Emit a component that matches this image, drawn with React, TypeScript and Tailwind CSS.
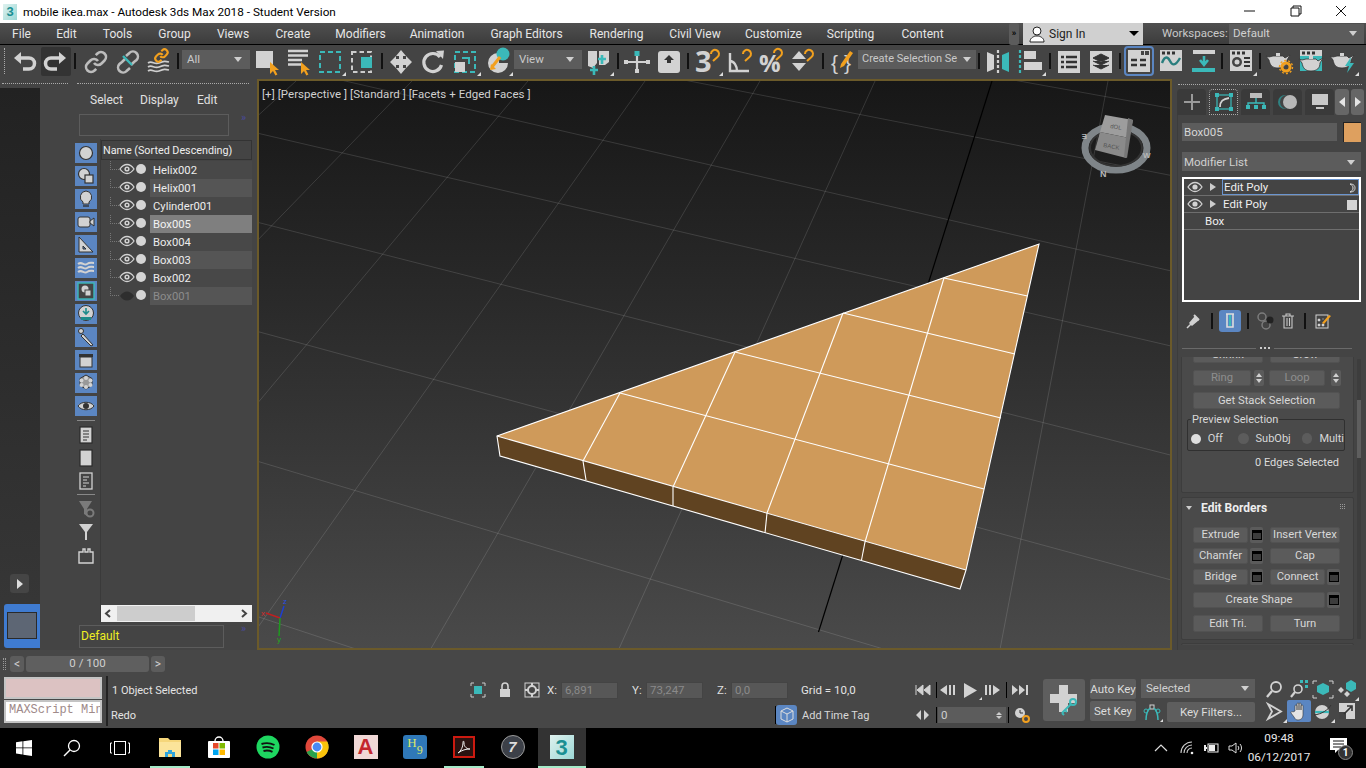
import React from 'react';

const L = '#d2d2d2';
const T = '#3bb9b9';
const O = '#f2a01e';

function Ico({ w = 32, h = 32, children }: { w?: number; h?: number; children?: React.ReactNode }) {
  return (
    <svg width={w} height={h} viewBox={`0 0 ${w} ${h}`} className="shrink-0 overflow-visible">
      {children}
    </svg>
  );
}
const Fly = ({ x = 30, y = 29 }: { x?: number; y?: number }) => <path d={`M${x} ${y}h-4l4-4z`} fill="#ddd" />;
const Cursor = ({ x, y }: { x: number; y: number }) => (
  <path transform={`translate(${x} ${y})`} d="M0 0l9 8H5l2.4 4.5-2 1L3 9l-3 3z" fill={O} />
);
const Hook = ({ x, y }: { x: number; y: number }) => (
  <path transform={`translate(${x} ${y})`} d="M1 4a4 4 0 1 1 6.5 3L3 11" stroke={O} strokeWidth="2" fill="none" />
);
const Win = ({ x = 5, y = 5, w = 22, h = 21, bars = true }: { x?: number; y?: number; w?: number; h?: number; bars?: boolean }) => (
  <g>
    <rect x={x} y={y} width={w} height={h} fill={L} />
    {bars && (
      <>
        <rect x={x + 2} y={y + 1.5} width="3" height="3" fill="#333" />
        <rect x={x + 7} y={y + 1.5} width="3" height="3" fill="#333" />
        <rect x={x + 12} y={y + 1.5} width="3" height="3" fill="#333" />
      </>
    )}
  </g>
);
const Teapot = ({ x, y, fill = L }: { x: number; y: number; fill?: string }) => (
  <g transform={`translate(${x} ${y})`}>
    <path d="M5 5h10l2 2 5-3-3 5c0 5-3 8-9 8S2 14 1 9L-2 5l3 1z" fill={fill} stroke="#333" strokeWidth="0.8" />
    <rect x="8" y="2" width="4" height="3" fill={fill} />
  </g>
);

const Sep7 = () => (
  <div className="flex h-[32px] w-[7px] items-center justify-center">
    <div className="h-[16px] w-[2px] bg-[#111]" />
  </div>
);
const Sep6 = () => (
  <div className="flex h-[32px] w-[6px] items-center justify-center">
    <div className="h-[16px] w-[2px] bg-[#111]" />
  </div>
);
const Caret = () => (
  <svg width="8" height="5" viewBox="0 0 8 5" className="shrink-0">
    <path d="M0 0h8L4 5z" fill="#cfcfcf" />
  </svg>
);

function Toolbar() {
  return (
    <div className="flex h-[34px] items-center bg-[#444444] pb-[2px] pl-[4px]">
      <div className="mr-[4px] h-[26px] w-[1px] border-l border-dotted border-[#aaa]" />
      <Ico>
        <path d="M9 13h11a5.5 5.5 0 0 1 0 11h-6" stroke={L} strokeWidth="3.5" fill="none" />
        <path d="M5 13l7-6v12z" fill={L} />
      </Ico>
      <div className="flex h-[29px] w-[30px] items-center justify-center rounded-[2px] bg-[#333333]">
        <Ico w={30}>
          <path d="M21 13H10a5.5 5.5 0 0 0 0 11h6" stroke={L} strokeWidth="3.5" fill="none" />
          <path d="M25 13l-7-6v12z" fill={L} />
        </Ico>
      </div>
      <div className="flex h-[32px] w-[8px] items-center justify-center">
        <div className="h-[16px] w-[2px] bg-[#111]" />
      </div>
      <Ico>
        <g transform="translate(5 5)" stroke="#bdbdbd" strokeWidth="2.6" fill="none">
          <path d="M10 13a5 5 0 0 0 7.54.54l3-3a5 5 0 0 0-7.07-7.07l-1.72 1.71" />
          <path d="M14 11a5 5 0 0 0-7.54-.54l-3 3a5 5 0 0 0 7.07 7.07l1.71-1.71" />
        </g>
      </Ico>
      <Ico>
        <g transform="translate(5 5)" stroke="#bdbdbd" strokeWidth="2.6" fill="none">
          <path d="M15 15l3-3 2.5-2a5 5 0 0 0-7.07-7.07L10 6" />
          <path d="M9 9l-3 3-2.5 2a5 5 0 0 0 7.07 7.07L14 18" />
        </g>
        <path d="M12 11l9 9" stroke={T} strokeWidth="2.4" />
      </Ico>
      <Ico>
        <g stroke="#cfcfcf" strokeWidth="1.6" fill="none">
          <path d="M5 18c4-3 6 2 11 0s6-2 10-1" />
          <path d="M5 22c4-3 6 2 11 0s6-2 10-1" />
          <path d="M5 26c4-3 6 2 11 0s6-2 10-1" />
        </g>
        <g transform="translate(11 3) scale(0.62)" stroke={O} strokeWidth="3.4" fill="none">
          <path d="M10 13a5 5 0 0 0 7.54.54l3-3a5 5 0 0 0-7.07-7.07l-1.72 1.71" />
          <path d="M14 11a5 5 0 0 0-7.54-.54l-3 3a5 5 0 0 0 7.07 7.07l1.71-1.71" />
        </g>
      </Ico>
      <div className="flex h-[32px] w-[6px] items-center justify-center">
        <div className="h-[16px] w-[2px] bg-[#111]" />
      </div>
      <div className="mb-[3px] ml-[1px] flex h-[19px] w-[68px] items-center justify-between bg-[#5c5c5c] pl-[5px] pr-[8px] text-[11.5px] text-[#c9c9c9]">
        <span>All</span>
        <Caret />
      </div>
      <Ico>
        <rect x="6" y="6" width="17" height="17" fill={L} />
        <Cursor x={20} y={17} />
      </Ico>
      <Ico>
        <path d="M6 6h20M6 10.5h20M6 15h14M6 19.5h14" stroke={L} strokeWidth="2.4" />
        <Cursor x={19} y={17} />
      </Ico>
      <Ico>
        <rect x="6" y="7" width="20" height="20" fill="none" stroke={T} strokeWidth="2" strokeDasharray="5 3" />
        <Fly x={32} y={31} />
      </Ico>
      <Ico>
        <rect x="6" y="7" width="19" height="20" fill="none" stroke="#ccc" strokeWidth="2" strokeDasharray="4.5 3" />
        <rect x="15" y="12" width="11" height="11" fill={T} />
      </Ico>
      <Sep7 />
      <Ico>
        <path d="M16 5l5 6h-3v3h3v-3l6 6-6 6v-3h-3v3h3l-5 6-5-6h3v-3h-3v3l-6-6 6-6v3h3v-3h-3z" fill={L} />
      </Ico>
      <Ico>
        <path d="M23 12a9 9 0 1 0 1.5 8" stroke={L} strokeWidth="3.2" fill="none" />
        <path d="M19 6l8-.5-1 8.5z" fill={L} />
      </Ico>
      <Ico>
        <rect x="6" y="7" width="20" height="20" fill="none" stroke={T} strokeWidth="2" strokeDasharray="5 3" />
        <rect x="6" y="17" width="10" height="10" fill={L} />
        <path d="M13 13h7v6" stroke={T} strokeWidth="2" fill="none" />
        <Fly x={32} y={31} />
      </Ico>
      <Ico>
        <path d="M17 8a10 10 0 1 0 10 10h-9v-9z" fill={L} />
        <circle cx="22" cy="9" r="6.5" fill={T} />
        <path d="M11 22l8-10" stroke={O} strokeWidth="3" />
        <path d="M10 19l5 5-6 1z" fill={O} />
        <Fly x={32} y={31} />
      </Ico>
      <div className="mb-[3px] ml-[1px] flex h-[19px] w-[68px] items-center justify-between bg-[#5c5c5c] pl-[5px] pr-[8px] text-[11.5px] text-[#c9c9c9]">
        <span>View</span>
        <Caret />
      </div>
      <Ico>
        <path d="M6 6h9v12l-4 5-5-2zM17 6h10v11l-4 3h-6z" fill={L} />
        <path d="M13 25h8M17 21v9M21 14h8M25 10v9" stroke={T} strokeWidth="2.6" transform="translate(-5 0)" />
        <Fly x={32} y={31} />
      </Ico>
      <Sep7 />
      <Ico>
        <path d="M5 17h22M16 10v17" stroke={L} strokeWidth="2.2" />
        <rect x="13.5" y="6" width="5" height="5" fill={T} />
        <rect x="3" y="15" width="4" height="4" fill={L} />
        <rect x="25" y="15" width="4" height="4" fill={L} />
        <rect x="14" y="24" width="4" height="4" fill={L} />
      </Ico>
      <Ico>
        <rect x="5" y="6" width="22" height="22" rx="3" fill={L} />
        <path d="M16 10l5 5h-3v3h-4v-3h-3z" fill="#333" />
      </Ico>
      <Sep6 />
      <Ico>
        <text x="4" y="27" fontSize="29" fontWeight="700" fill={L} fontFamily="Open Sans, sans-serif">3</text>
        <Hook x={19} y={5} />
        <Fly x={32} y={31} />
      </Ico>
      <Ico>
        <path d="M7 8v18h19M7 16c4 0 7 5 7 10" stroke={L} strokeWidth="2.4" fill="none" />
        <Hook x={19} y={5} />
      </Ico>
      <Ico>
        <text x="4" y="27" fontSize="24" fontWeight="700" fill={L} fontFamily="Open Sans, sans-serif">%</text>
        <Hook x={18} y={4} />
      </Ico>
      <Ico>
        <path d="M5 14l7-8 7 8zM5 18h14l-7 8z" fill={L} />
        <Hook x={17} y={5} />
      </Ico>
      <Sep7 />
      <Ico>
        <text x="5" y="25" fontSize="21" fill={L} fontFamily="Liberation Sans, sans-serif">{'{'}</text>
        <text x="18" y="25" fontSize="21" fill={L} fontFamily="Liberation Sans, sans-serif">{'}'}</text>
        <path d="M15 19l9-13 3 2-9 13-4 2z" fill={O} />
      </Ico>
      <div className="mb-[3px] flex h-[19px] w-[118px] items-center justify-between bg-[#5c5c5c] pl-[4px] pr-[5px] text-[11px] text-[#c9c9c9]">
        <span className="whitespace-nowrap">Create Selection Se</span>
        <Caret />
      </div>
      <Sep6 />
      <Ico>
        <path d="M5 7l7 3v14l-7 3z" fill={L} />
        <path d="M16 5v24" stroke={L} strokeWidth="2.2" strokeDasharray="3 2" />
        <path d="M27 7l-7 3v14l7 3z" fill={T} />
      </Ico>
      <Ico>
        <path d="M6 5v24" stroke={T} strokeWidth="2.2" strokeDasharray="3 2" />
        <rect x="10" y="6" width="12" height="8" fill={L} />
        <rect x="10" y="17" width="18" height="8" fill={L} />
        <Fly x={32} y={31} />
      </Ico>
      <Sep7 />
      <Ico>
        <rect x="5" y="6" width="22" height="22" fill={L} />
        <path d="M8 12h3M13 12h11M8 17h3M13 17h11M8 22h3M13 22h11" stroke="#333" strokeWidth="2.4" />
      </Ico>
      <Ico>
        <rect x="5" y="6" width="22" height="22" fill={L} />
        <path d="M16 9l8 4-8 4-8-4zM8 16l8 4 8-4M8 20l8 4 8-4" fill="#333" stroke="#333" strokeWidth="1" />
      </Ico>
      <Sep6 />
      <div className="mx-[1px] flex h-[30px] w-[30px] items-center justify-center rounded-[4px] border-2 border-[#5b86c2]">
        <svg width="22" height="22" viewBox="0 0 22 22">
          <rect x="0" y="0" width="22" height="22" fill={L} />
          <path d="M13 1h3v4h-3zM17 1h4v4h-4z" fill="#444" />
          <path d="M3 10h6M12 10h6M3 15h6M12 15h6" stroke="#333" strokeWidth="2.4" />
        </svg>
      </div>
      <Ico>
        <Win />
        <path d="M7 18c3-8 6-6 8-2s5 6 10-3" stroke="#2a7e7e" strokeWidth="2.4" fill="none" />
      </Ico>
      <Ico>
        <rect x="6" y="5" width="22" height="4" fill={L} />
        <path d="M17 11v7M13 15l4 5 4-5" stroke={T} strokeWidth="2.6" fill="none" />
        <rect x="5" y="23" width="23" height="4" fill={T} />
      </Ico>
      <Sep6 />
      <Ico>
        <Win />
        <circle cx="12" cy="17" r="5" fill="#444" />
        <circle cx="12" cy="17" r="2.5" fill={L} />
        <path d="M19 13h6M19 17h6M19 21h6" stroke="#333" strokeWidth="1.8" />
        <Fly x={32} y={31} />
      </Ico>
      <Sep6 />
      <Ico>
        <Teapot x={5} y={6} />
        <circle cx="23" cy="22" r="4" fill="none" stroke={O} strokeWidth="3" />
        <circle cx="23" cy="22" r="6.5" fill="none" stroke={O} strokeWidth="1.4" strokeDasharray="2 2" />
      </Ico>
      <Ico>
        <Win />
        <rect x="5" y="11" width="22" height="15" fill={T} />
        <Teapot x={6} y={9} />
      </Ico>
      <Ico>
        <Teapot x={5} y={6} />
        <path d="M24 12l-6 9h4l-2 7 7-10h-4z" fill={T} />
        <Fly x={32} y={31} />
      </Ico>
    </div>
  );
}

function Menu() {
  const items: [string, string][] = [
    ['File', 'w-[17px]'], ['Edit', 'w-[21px]'], ['Tools', 'w-[29px]'], ['Group', 'w-[33px]'], ['Views', 'w-[32px]'],
    ['Create', 'w-[36px]'], ['Modifiers', 'w-[47px]'], ['Animation', 'w-[54px]'], ['Graph Editors', 'w-[73px]'],
    ['Rendering', 'w-[55px]'], ['Civil View', 'w-[50px]'], ['Customize', 'w-[55px]'], ['Scripting', 'w-[47px]'], ['Content', 'w-[45px]'],
  ];
  return (
    <div className="flex h-[22px] items-center border-b border-black bg-gradient-to-b from-[#505050] to-[#3c3c3c] pl-[13px]">
      <div className="flex w-[932px] gap-[26px]">
        {items.map(([t, w]) => (
          <div key={t} className={`${w} flex justify-center whitespace-nowrap text-[12px] text-[#e6e6e6]`}>{t}</div>
        ))}
      </div>
      <div className="ml-[64px] flex h-[22px] w-[10px] items-center justify-center rounded-[2px] bg-[#5c5c5c] text-[9px] font-bold text-black">»</div>
      <div className="ml-[4px] flex h-[22px] w-[120px] items-center bg-[#d0d0d0] pl-[5px] pr-[4px] text-[12px] text-[#222]">
        <svg width="18" height="18" viewBox="0 0 18 18">
          <circle cx="9" cy="6" r="4" fill="#fff" stroke="#222" />
          <path d="M2 17c0-4 3-5 5-6h4c2 1 5 2 5 6z" fill="#fff" stroke="#222" />
        </svg>
        <span className="ml-[3px]">Sign In</span>
        <span className="ml-auto h-0 w-0 border-x-[5px] border-t-[5px] border-x-transparent border-t-black" />
      </div>
      <div className="ml-[19px] w-[67px] whitespace-nowrap text-[11.5px] text-[#c8c8c8]">Workspaces:</div>
      <div className="flex h-[20px] w-[135px] items-center justify-between bg-[#5c5c5c] pl-[4px] pr-[7px] text-[11.5px] text-[#d0d0d0]">
        <span>Default</span>
        <Caret />
      </div>
    </div>
  );
}

const xs81 = [296, 412, 528, 645, 760, 875, 1108, 1224, 180, 64];
const ys: [number, number][] = [[-16, 0.18], [40, 0.196], [112, 0.23], [185, 0.233], [279, 0.255], [392, 0.272], [528, 0.3], [690, 0.33]];

function Scene() {
  const topP: [number, number][] = [[620, 393], [735, 352], [843, 313], [944, 278]];
  const botP: [number, number][] = [[583, 461], [673, 487], [767, 513], [865, 542]];
  const rigP: [number, number][] = [[1027.5, 296], [1015, 354], [1001, 418], [984, 489]];
  const lowP: [number, number][] = [[586, 480], [673, 506], [765, 533], [861.5, 560]];
  return (
    <svg width="911" height="567" viewBox="259 81 911 567" className="absolute left-0 top-0">
      {xs81.map((x) => {
        const s = -0.19 - (1108 - x) * 0.00112;
        return <line key={x} x1={x} y1={81} x2={x + s * 567} y2={648} stroke="#fff" strokeOpacity="0.13" />;
      })}
      {ys.map(([y, s]) => (
        <line key={y} x1={259} y1={y + (259 - 480) * s} x2={1170} y2={y + (1170 - 480) * s} stroke="#fff" strokeOpacity="0.13" />
      ))}
      <line x1={992} y1={81} x2={818.5} y2={632} stroke="#000" strokeWidth="1.2" />
      <polygon points="497,436 1039,244 966,570" fill="#cf9a5a" />
      <polygon points="497,436 966,570 960,589 500,456" fill="#604321" />
      <g stroke="#fff" strokeWidth="1.1" fill="none">
        <polygon points="497,436 1039,244 966,570 960,589 500,456" />
        <line x1={497} y1={436} x2={966} y2={570} />
        {topP.map((p, i) => <line key={i} x1={p[0]} y1={p[1]} x2={botP[i][0]} y2={botP[i][1]} />)}
        {topP.map((p, i) => <line key={i} x1={p[0]} y1={p[1]} x2={rigP[3 - i][0]} y2={rigP[3 - i][1]} />)}
        {botP.map((p, i) => <line key={i} x1={p[0]} y1={p[1]} x2={lowP[i][0]} y2={lowP[i][1]} />)}
      </g>
      <g>
        <ellipse cx="1116" cy="148" rx="31" ry="22" fill="none" stroke="#7f8589" strokeWidth="7" />
        <ellipse cx="1116" cy="148" rx="26" ry="18" fill="none" stroke="#333" strokeWidth="2" />
        <polygon points="1105,115 1133,120 1129,138 1100,132" fill="#9d9d9d" />
        <polygon points="1100,132 1129,138 1126,158 1095,150" fill="#8a8a8a" />
        <polygon points="1128,118 1133,120 1127,158 1124,157" fill="#777" />
        <text x="1110" y="128" fontSize="6" fill="#555" fontFamily="Liberation Sans, sans-serif" transform="rotate(10 1110 128)">dOL</text>
        <text x="1103" y="147" fontSize="6" fill="#555" fontFamily="Liberation Sans, sans-serif" transform="rotate(10 1103 147)">BACK</text>
        <text x="1100" y="177" fontSize="9" fontWeight="700" fill="#b8b8b8" fontFamily="Liberation Sans, sans-serif">N</text>
        <text x="1081" y="142" fontSize="8" fontWeight="700" fill="#b8b8b8" fontFamily="Liberation Sans, sans-serif" transform="rotate(180 1084 138)">E</text>
        <text x="1143" y="158" fontSize="8" fontWeight="700" fill="#b8b8b8" fontFamily="Liberation Sans, sans-serif">W</text>
      </g>
      <g strokeWidth="1.5" fontFamily="Liberation Sans, sans-serif" fontSize="8">
        <line x1={280} y1={618} x2={284} y2={606} stroke="#1d3fd0" />
        <line x1={280} y1={618} x2={266} y2={613} stroke="#c02020" />
        <line x1={280} y1={618} x2={279} y2={636} stroke="#1f9a1f" />
        <text x="283" y="604" fill="#2a4fe0" stroke="none">z</text>
        <text x="261" y="616" fill="#d03030" stroke="none">x</text>
        <text x="277" y="642" fill="#22a522" stroke="none">y</text>
      </g>
    </svg>
  );
}

const Tile = ({ children }: { children?: React.ReactNode }) => (
  <div className="mb-[3px] flex h-[20px] w-[22px] items-center justify-center bg-[#5b86c2]">
    <svg width="22" height="20" viewBox="0 0 22 20">{children}</svg>
  </div>
);
const Plain = ({ children }: { children?: React.ReactNode }) => (
  <svg width="22" height="20" viewBox="0 0 22 20" className="mb-[3px] block">{children}</svg>
);
const D = '#333';

function IconColumn() {
  return (
    <div className="mt-[4px] flex w-[22px] flex-col">
      <Tile><circle cx="11" cy="10" r="6.5" fill={L} stroke={D} strokeWidth="1.2" /></Tile>
      <Tile><circle cx="9" cy="8" r="5.5" fill={L} stroke={D} strokeWidth="1.2" /><rect x="10" y="9" width="8" height="8" fill={L} stroke={D} strokeWidth="1.2" /></Tile>
      <Tile><path d="M11 2a6 6 0 0 1 3 11v2H8v-2A6 6 0 0 1 11 2z" fill={L} stroke={D} /><path d="M8 17h6" stroke={D} strokeWidth="1.4" /></Tile>
      <Tile><rect x="3" y="5" width="12" height="10" rx="2" fill={L} stroke={D} /><path d="M15 9l4-3v8l-4-3z" fill={L} stroke={D} /></Tile>
      <Tile><path d="M4 2l14 15H4z" fill={L} stroke={D} /><path d="M8 11l3 3H8z" fill="#5b86c2" stroke={D} /></Tile>
      <Tile><g stroke={L} strokeWidth="2" fill="none"><path d="M3 6c4-3 6 2 9 0s4-1 7-1" /><path d="M3 10c4-3 6 2 9 0s4-1 7-1" /><path d="M3 14c4-3 6 2 9 0s4-1 7-1" /></g></Tile>
      <Tile><rect x="3" y="2" width="16" height="16" fill="#444" stroke={T} strokeWidth="1.4" /><circle cx="10" cy="8" r="3.5" fill={L} /><rect x="10" y="9" width="6" height="6" fill={L} stroke="#444" /></Tile>
      <Tile><circle cx="11" cy="9" r="7.5" fill={L} stroke={D} /><path d="M11 4v5M8 7l3 3 3-3" stroke="#1f8b8b" strokeWidth="1.6" fill="none" /><path d="M6 13h10v3H6z" fill="#1f8b8b" /></Tile>
      <Tile><circle cx="6" cy="4" r="2.5" fill={L} stroke={D} /><path d="M8 7l10 11-2 1L6 9z" fill={L} stroke={D} /></Tile>
      <Tile><rect x="4" y="4" width="14" height="3" fill="#333" /><rect x="5" y="7" width="12" height="10" fill={L} stroke={D} /></Tile>
      <Tile><path d="M11 2l6 3.5v7L11 16l-6-3.5v-7z" fill="#999" stroke={D} /><circle cx="11" cy="5" r="2" fill={L} /><circle cx="11" cy="14" r="2" fill={L} /><circle cx="6.5" cy="7.5" r="2" fill={L} /><circle cx="15.5" cy="7.5" r="2" fill={L} /><circle cx="6.5" cy="12" r="2" fill={L} /><circle cx="15.5" cy="12" r="2" fill={L} /></Tile>
      <Tile><path d="M3 10c3-5 13-5 16 0-3 5-13 5-16 0z" fill={L} stroke={D} /><circle cx="11" cy="10" r="3" fill={D} /></Tile>
      <div className="ml-[2px] mt-[1px] h-[1px] w-[18px] bg-[#888]" />
      <div className="mt-[4px]" />
      <Plain><rect x="5" y="2" width="12" height="16" fill={L} stroke="#2a2a2a" strokeWidth="1.2" /><path d="M8 6h6M8 9h6M8 12h6M8 15h4" stroke="#333" strokeWidth="1.2" /></Plain>
      <Plain><rect x="5" y="2" width="12" height="16" fill={L} stroke="#2a2a2a" strokeWidth="1.2" /></Plain>
      <Plain><rect x="5" y="2" width="12" height="16" fill="#444" stroke={L} strokeWidth="1.3" /><path d="M8 6h6M8 9h4M8 12h6M8 15h3" stroke={L} strokeWidth="1.2" /></Plain>
      <div className="ml-[2px] h-[1px] w-[18px] bg-[#888]" />
      <div className="mt-[4px]" />
      <Plain><path d="M4 2h13l-5 8v7l-3-2v-5z" fill="#7b7b7b" /><circle cx="15" cy="14" r="3.5" fill="none" stroke="#7b7b7b" strokeWidth="2" /></Plain>
      <Plain><path d="M4 2h14l-6 8v8h-2v-8z" fill={L} /></Plain>
      <Plain><path d="M4 7h4V4h2v3h3V4h2v3h3v11H4z" fill="none" stroke={L} strokeWidth="1.4" /></Plain>
    </div>
  );
}

function Rows() {
  const rows: [string, string, string][] = [
    ['Helix002', 'bg-[#484848]', 'text-[#ececec]'],
    ['Helix001', 'bg-[#555555]', 'text-[#ececec]'],
    ['Cylinder001', 'bg-[#484848]', 'text-[#ececec]'],
    ['Box005', 'bg-[#7f7f7f]', 'text-[#f2f2f2]'],
    ['Box004', 'bg-[#484848]', 'text-[#ececec]'],
    ['Box003', 'bg-[#555555]', 'text-[#ececec]'],
    ['Box002', 'bg-[#484848]', 'text-[#ececec]'],
    ['Box001', 'bg-[#555555]', 'text-[#8c8c8c]'],
  ];
  return (
    <>
      {rows.map(([n, bg, tx], i) => (
        <div key={n} className="flex h-[18px] items-start">
          <div className="ml-[9px] h-[9px] w-[9px] border-b border-l border-dotted border-[#777]" />
          <svg width="16" height="14" viewBox="0 0 16 14" className="mt-[1px] shrink-0">
            {i === 7 ? (
              <path d="M1 8c4-6 10-6 14 0-4 6-10 6-14 0z" fill="#2e2e2e" />
            ) : (
              <>
                <path d="M1 7c4-6 10-6 14 0-4 6-10 6-14 0z" fill="none" stroke={L} strokeWidth="1.3" />
                <circle cx="8" cy="7" r="2.6" fill={L} />
                <circle cx="8" cy="7" r="1" fill="#333" />
              </>
            )}
          </svg>
          <div className="ml-[1px] mt-[3px] h-[10px] w-[10px] rounded-full bg-[#d4d4d4]" />
          <div className={`ml-[4px] flex h-[18px] flex-1 items-center pl-[3px] pt-[2px] text-[11.25px] ${bg} ${tx}`}>{n}</div>
        </div>
      ))}
    </>
  );
}

function LeftPanel() {
  return (
    <div className="flex h-[571px] w-[257px] flex-col bg-[#444444]">
      <div className="flex h-[9px] items-center pl-[2px]">
        <div className="w-[66px] border-t border-dotted border-[#aaa]" />
        <div className="ml-[9px] w-[172px] border-t border-dotted border-[#aaa]" />
      </div>
      <div className="flex flex-1">
        <div className="flex w-[40px] flex-col justify-end bg-gradient-to-b from-[#222222] to-[#383838]">
          <div className="mb-[11px] ml-[10px] flex h-[19px] w-[19px] items-center justify-center rounded-[3px] bg-[#454545]">
            <div className="h-0 w-0 border-y-[5px] border-l-[6px] border-y-transparent border-l-[#ddd]" />
          </div>
          <div className="mb-[2px] ml-[4px] flex h-[44px] w-[36px] items-start rounded-l-[3px] bg-[#3f7bd0] pl-[3px] pt-[8px]">
            <div className="h-[27px] w-[30px] border border-[#2a2a2a] bg-[#5d6674]" />
          </div>
        </div>
        <div className="flex w-[217px] flex-col">
          <div className="flex h-[24px] items-center pl-[50px] text-[12px] text-[#e0e0e0]">
            <span className="w-[50px]">Select</span>
            <span className="w-[57px]">Display</span>
            <span>Edit</span>
          </div>
          <div className="mt-[2px] flex">
            <div className="ml-[39px] h-[22px] w-[150px] border border-[#5c5c5c]" />
            <span className="-mt-[4px] ml-[12px] text-[11px] text-[#4a4a9a]">»</span>
          </div>
          <div className="mt-[3px] flex h-[483px] pl-[35px]">
            <IconColumn />
            <div className="ml-[3px] flex w-[152px] flex-col border-l border-[#3a3a3a]">
              <div className="mt-[1px] flex h-[20px] items-center whitespace-nowrap border border-[#333] pl-[1px] pt-[2px] text-[10.75px] text-[#eee]">Name (Sorted Descending)</div>
              <div className="mt-[1px] flex-1">
                <Rows />
              </div>
              <div className="flex h-[17px] items-center bg-[#f0f0f0] pl-[3px]">
                <svg width="8" height="9" viewBox="0 0 8 9"><path d="M6 1L2 4.5 6 8" stroke="#444" strokeWidth="2" fill="none" /></svg>
                <div className="ml-[5px] h-[15px] w-[78px] bg-[#cdcdcd]" />
                <svg width="8" height="9" viewBox="0 0 8 9" className="ml-auto mr-[4px]"><path d="M2 1l4 3.5L2 8" stroke="#444" strokeWidth="2" fill="none" /></svg>
              </div>
            </div>
          </div>
          <div className="mt-[3px] flex">
            <div className="ml-[39px] flex h-[23px] w-[145px] items-center border border-[#5c5c5c] pb-[2px] pl-[1px] text-[12px] text-[#eeee22]">Default</div>
            <span className="-mt-[4px] ml-[17px] text-[11px] text-[#4a4a9a]">»</span>
          </div>
        </div>
      </div>
    </div>
  );
}

const Btn = ({ cls, dim, children }: { cls: string; dim?: boolean; children?: React.ReactNode }) => (
  <div className={`flex items-center justify-center whitespace-nowrap rounded-[2px] border border-[#525252] bg-[#5b5b5b] pt-[1px] text-[11.25px] ${dim ? 'text-[#8e8e8e]' : 'text-[#d8d8d8]'} ${cls}`}>{children}</div>
);
const Opt = ({ cls }: { cls: string }) => (
  <div className={`flex h-[16px] items-center justify-center rounded-[2px] bg-[#5b5b5b] ${cls}`}>
    <div className="h-[10px] w-[10px] border border-t-[3px] border-black bg-[#3c3c3c]" />
  </div>
);
const Spin = ({ cls }: { cls: string }) => (
  <div className={`flex h-[16px] flex-col items-center justify-center gap-[2px] rounded-[2px] bg-[#5b5b5b] ${cls}`}>
    <div className="h-0 w-0 border-x-[3px] border-b-[4px] border-x-transparent border-b-[#d0d0d0]" />
    <div className="h-0 w-0 border-x-[3px] border-t-[4px] border-x-transparent border-t-[#d0d0d0]" />
  </div>
);

function StackRow({ name, pad, right, eye, active }: { name: string; pad?: boolean; right?: React.ReactNode; eye?: boolean; active?: boolean }) {
  return (
    <div className="flex h-[17px] items-center border-b border-[#6e6e6e]">
      {eye ? (
        <>
          <svg width="16" height="12" viewBox="0 0 16 12" className="ml-[3px] shrink-0">
            <path d="M1 6c4-6 10-6 14 0-4 6-10 6-14 0z" fill="none" stroke={L} strokeWidth="1.3" />
            <circle cx="8" cy="6" r="2.6" fill={L} />
          </svg>
          <div className="ml-[7px] h-0 w-0 border-y-[4px] border-l-[6px] border-y-transparent border-l-[#ccc]" />
        </>
      ) : null}
      <div className={`flex h-[16px] flex-1 items-center pt-[2px] text-[11.5px] text-[#eee] ${pad ? 'ml-[21px]' : 'ml-[6px] pl-[1px]'} ${active ? 'border border-[#6b95cf]' : ''}`}>
        <span>{name}</span>
        <span className="ml-auto mr-[2px] flex items-center">{right}</span>
      </div>
    </div>
  );
}

function RightPanel() {
  const Tab = ({ children, active }: { children?: React.ReactNode; active?: boolean }) => (
    <div className={`flex h-[26px] w-[29px] items-center justify-center rounded-t-[4px] ${active ? 'border border-dotted border-[#aaa] bg-[#3d3d3d]' : 'bg-[#3a3a3a]'}`}>
      <svg width="26" height="22" viewBox="0 0 26 22">{children}</svg>
    </div>
  );
  return (
    <div className="flex h-[571px] w-[194px] flex-col bg-[#444444]">
      <div className="flex h-[10px] items-center pl-[6px]">
        <div className="w-[184px] border-t border-dotted border-[#aaa]" />
      </div>
      <div className="ml-[5px] flex h-[26px] gap-[3px]">
        <Tab><path d="M13 3v16M5 11h16" stroke="#9a9a9a" strokeWidth="2" /></Tab>
        <Tab active>
          <rect x="6" y="4" width="14" height="14" fill="none" stroke={T} strokeWidth="1.2" />
          <path d="M9 16c0-6 3-8 9-9" stroke={L} strokeWidth="1.8" fill="none" />
          <rect x="4" y="2" width="4" height="4" fill={T} /><rect x="18" y="2" width="4" height="4" fill={T} /><rect x="4" y="16" width="4" height="4" fill={T} /><rect x="18" y="16" width="4" height="4" fill={T} />
        </Tab>
        <Tab>
          <rect x="7" y="2" width="12" height="5" fill="#bcbcbc" />
          <path d="M13 7v5M5 14v-2h16v2" stroke={T} strokeWidth="1.4" fill="none" />
          <rect x="3" y="14" width="4" height="4" fill={T} /><rect x="19" y="14" width="4" height="4" fill={T} /><rect x="11" y="14" width="4" height="4" fill={T} />
        </Tab>
        <Tab>
          <circle cx="10" cy="11" r="7" fill="#2f8282" /><circle cx="12" cy="11" r="7" fill="#444" /><circle cx="15" cy="11" r="7" fill="#b8b8b8" />
        </Tab>
        <Tab>
          <rect x="5" y="3" width="16" height="11" fill="#c8c8c8" /><rect x="9" y="16" width="8" height="2" fill="#c8c8c8" />
        </Tab>
        <div className="-ml-[2px] flex gap-[2px]">
          <div className="flex h-[26px] w-[14px] items-center justify-center rounded-[3px] bg-[#666666]">
            <div className="h-0 w-0 border-y-[5px] border-r-[6px] border-y-transparent border-r-[#e4e4e4]" />
          </div>
          <div className="flex h-[26px] w-[13px] items-center justify-center rounded-[3px] bg-[#666666]">
            <div className="h-0 w-0 border-y-[5px] border-l-[6px] border-y-transparent border-l-[#e4e4e4]" />
          </div>
        </div>
      </div>
      <div className="ml-[5px] flex flex-1 flex-col overflow-hidden border-l border-[#3c3c3c]">
        <div className="ml-[4px] mt-[7px] flex items-start">
          <div className="mt-[1px] flex h-[18px] w-[155px] items-center bg-[#5c5c5c] pl-[2px] pt-[2px] text-[11.5px] text-[#d6d6d6]">Box005</div>
          <div className="ml-[6px] h-[20px] w-[18px] border-l border-t border-[#222] bg-[#dea05f]" />
        </div>
        <div className="ml-[4px] mt-[10px] flex h-[19px] w-[179px] items-center justify-between bg-[#5c5c5c] pl-[2px] pr-[6px] pt-[2px] text-[11.5px] text-[#d0d0d0]">
          <span>Modifier List</span>
          <Caret />
        </div>
        <div className="ml-[4px] mt-[6px] h-[125px] w-[179px] border-2 border-white">
          <StackRow
            name="Edit Poly"
            eye
            active
            right={
              <svg width="8" height="10" viewBox="0 0 8 10">
                <path d="M2 1c4 0 5 2 5 4s-1 4-5 4c2-1 3-2 3-4S4 2 2 1z" fill="none" stroke="#ddd" />
              </svg>
            }
          />
          <StackRow name="Edit Poly" eye right={<span className="block h-[10px] w-[10px] bg-[#d4d4d4]" />} />
          <StackRow name="Box" pad />
        </div>
        <div className="ml-[4px] mt-[8px] flex h-[22px] items-center">
          <svg width="22" height="22" viewBox="0 0 22 22"><path d="M8 13l5-6 3 3-6 5zM9 14l-4 4" stroke={L} strokeWidth="1.5" fill={L} /><path d="M12 5l5 5" stroke={L} strokeWidth="2" /></svg>
          <div className="ml-[7px] h-[16px] w-[2px] bg-[#111]" />
          <div className="ml-[6px] flex h-[22px] w-[22px] items-center justify-center rounded-[3px] bg-[#5b86c2]">
            <svg width="10" height="16" viewBox="0 0 10 16"><path d="M1 1h8M2 1v13h6V1" stroke="#ddd" strokeWidth="1.6" fill="none" /><rect x="4" y="2" width="2" height="11" fill={T} /></svg>
          </div>
          <div className="ml-[6px] h-[16px] w-[2px] bg-[#111]" />
          <svg width="20" height="20" viewBox="0 0 20 20" className="ml-[7px]">
            <circle cx="6" cy="6" r="4" fill="none" stroke="#7c7c7c" strokeWidth="1.5" />
            <circle cx="10" cy="14" r="4" fill="none" stroke="#7c7c7c" strokeWidth="1.5" />
            <circle cx="14" cy="9" r="3.5" fill="#222" />
          </svg>
          <svg width="14" height="16" viewBox="0 0 14 16" className="ml-[5px]"><path d="M1 3h12M5 3V1h4v2M3 3v12h8V3M6 5v8M8.5 5v8" stroke="#c8c8c8" strokeWidth="1.1" fill="none" /></svg>
          <div className="ml-[9px] h-[16px] w-[2px] bg-[#111]" />
          <svg width="16" height="16" viewBox="0 0 16 16" className="ml-[9px]"><rect x="1" y="2" width="12" height="13" fill="none" stroke={L} /><path d="M3 6h2v2H3zM7 6h2M3 11h2v2H3zM7 11h2v2H7z" fill={L} stroke={L} strokeWidth="0.5" /><path d="M7 10l7-8 2 1-7 8z" fill={O} /></svg>
        </div>
        <div className="mt-[12px] flex h-[8px] items-center pl-[4px]">
          <div className="w-[74px] border-t border-[#6a6a6a]" />
          <div className="mx-[4px] w-[10px] border-t-2 border-dotted border-[#ccc]" />
          <div className="w-[78px] border-t border-[#6a6a6a]" />
        </div>
        <div className="mt-[5px] flex h-[288px] overflow-hidden pl-[3px]">
          <div className="w-[173px] overflow-hidden">
            <div className="-mt-[12px] h-[148px] rounded-[2px] border border-[#3d3d3d] bg-[#4a4a4a] pl-[11px]">
              <div className="flex gap-[7px]">
                <Btn cls="h-[17px] w-[70px]">Shrink</Btn>
                <Btn cls="h-[17px] w-[70px]">Grow</Btn>
              </div>
              <div className="mt-[7px] flex">
                <Btn dim cls="h-[16px] w-[58px]">Ring</Btn>
                <Spin cls="ml-[3px] w-[10px]" />
                <Btn dim cls="ml-[5px] h-[16px] w-[56px]">Loop</Btn>
                <Spin cls="ml-[6px] w-[10px]" />
              </div>
              <Btn cls="mt-[6px] h-[17px] w-[147px]">Get Stack Selection</Btn>
              <div className="relative -ml-[6px] mt-[10px] flex h-[32px] w-[158px] items-end rounded-[2px] border border-[#303030] pb-[3px] pl-[3px] text-[11px] text-[#d8d8d8]">
                <span className="absolute -top-[7px] left-[3px] bg-[#4a4a4a] px-[1px] text-[11px] leading-[14px] text-[#d8d8d8]">Preview Selection</span>
                <div className="mb-[3px] h-[10px] w-[10px] rounded-full bg-[#dedede]" />
                <span className="ml-[7px]">Off</span>
                <div className="mb-[3px] ml-[15px] h-[11px] w-[11px] rounded-full bg-[#5c5c5c]" />
                <span className="ml-[7px]">SubObj</span>
                <div className="mb-[3px] ml-[11px] h-[11px] w-[11px] rounded-full bg-[#5c5c5c]" />
                <span className="ml-[7px]">Multi</span>
              </div>
              <div className="mt-[4px] w-[146px] text-right text-[11px] leading-[16px] text-[#dcdcdc]">0 Edges Selected</div>
            </div>
            <div className="mt-[4px] h-[143px] rounded-[2px] border border-[#3d3d3d] bg-[#4a4a4a] pl-[11px]">
              <div className="-ml-[7px] flex h-[19px] items-center text-[12px] font-bold text-[#eee]">
                <div className="h-0 w-0 border-x-[3px] border-t-[4px] border-x-transparent border-t-[#ccc]" />
                <span className="ml-[9px]">Edit Borders</span>
                <div className="mb-[3px] ml-auto mr-[8px] grid grid-cols-3 gap-[1px]">
                  {[0, 1, 2, 3, 4, 5, 6, 7, 8].map((i) => (
                    <div key={i} className="h-[1px] w-[1px] bg-[#999]" />
                  ))}
                </div>
              </div>
              <div className="mt-[10px] flex">
                <Btn cls="h-[16px] w-[55px]">Extrude</Btn>
                <Opt cls="ml-[2px] w-[13px]" />
                <Btn cls="ml-[7px] h-[16px] w-[70px]">Insert Vertex</Btn>
              </div>
              <div className="mt-[5px] flex">
                <Btn cls="h-[16px] w-[55px]">Chamfer</Btn>
                <Opt cls="ml-[2px] w-[13px]" />
                <Btn cls="ml-[7px] h-[16px] w-[70px]">Cap</Btn>
              </div>
              <div className="mt-[5px] flex">
                <Btn cls="h-[16px] w-[55px]">Bridge</Btn>
                <Opt cls="ml-[2px] w-[13px]" />
                <Btn cls="ml-[7px] h-[16px] w-[55px]">Connect</Btn>
                <Opt cls="ml-[2px] w-[13px]" />
              </div>
              <div className="mt-[7px] flex">
                <Btn cls="h-[16px] w-[132px]">Create Shape</Btn>
                <Opt cls="ml-[2px] w-[13px]" />
              </div>
              <div className="mt-[7px] flex">
                <Btn cls="h-[17px] w-[70px]">Edit Tri.</Btn>
                <Btn cls="ml-[7px] h-[17px] w-[70px]">Turn</Btn>
              </div>
            </div>
            <div className="mt-[3px] h-[4px] rounded-t-[2px] border border-[#3d3d3d] bg-[#4a4a4a]" />
          </div>
          <div className="ml-[3px] mt-[2px] flex h-[280px] w-[4px] flex-col rounded-[1px] bg-[#3d3d3d]">
            <div className="mt-[41px] h-[58px] w-[4px] bg-[#5e5e5e]" />
          </div>
        </div>
      </div>
    </div>
  );
}

function Coords({ label, value, cls }: { label: string; value: string; cls: string }) {
  return (
    <div className={`flex items-center ${cls}`}>
      <span className="w-[14px] pt-[1px] text-[11.5px] text-[#dedede]">{label}</span>
      <div className="flex h-[17px] w-[57px] items-center border border-[#444] bg-[#575757] pl-[3px] pt-[1px] text-[11.5px] text-[#8a8a8a]">{value}</div>
    </div>
  );
}

function Bottom() {
  return (
    <div className="flex h-[78px] flex-col bg-[#474747]">
      <div className="flex h-[26px] items-center pl-[3px] pt-[1px]">
        <div className="h-[12px] w-[3px] border-x border-dotted border-[#999]" />
        <div className="ml-[4px] flex h-[16px] w-[14px] items-center justify-center rounded-[3px] bg-[#5c5c5c] text-[12px] text-[#cfcfcf]">&lt;</div>
        <div className="ml-[2px] flex h-[16px] w-[123px] items-center justify-center rounded-[3px] bg-[#5f5f5f] pt-[1px] text-[11.5px] text-[#cfcfcf]">0 / 100</div>
        <div className="ml-[2px] flex h-[16px] w-[14px] items-center justify-center rounded-[3px] bg-[#5c5c5c] text-[12px] text-[#cfcfcf]">&gt;</div>
      </div>
      <div className="flex flex-1">
        <div className="ml-[4px] mt-[1px] flex h-[46px] w-[98px] flex-col gap-[1px]">
          <div className="h-[22px] border-2 border-[#c4c4c4] bg-[#dcc2c2]" />
          <div className="flex h-[23px] items-start overflow-hidden whitespace-nowrap border-2 border-[#c4c4c4] bg-white pl-[3px] font-['Liberation_Mono',monospace] text-[12px] leading-[16px] text-[#a08a8a]">MAXScript Mini</div>
        </div>
        <div className="ml-[4px] h-[50px] w-[2px] bg-[#222]" />
        <div className="flex w-[357px] flex-col pl-[3px] text-[11px] text-[#e4e4e4]">
          <div className="ml-[1px] flex h-[28px] items-center pt-[2px]">1 Object Selected</div>
          <div className="flex h-[22px] items-center pt-[2px]">Redo</div>
        </div>
        <div className="flex w-[449px] flex-col">
          <div className="flex h-[28px] items-center">
            <div className="flex w-[26px] justify-center">
              <svg width="16" height="16" viewBox="0 0 16 16">
                <path d="M1 4V1h3M12 1h3v3M15 12v3h-3M4 15H1v-3" stroke="#ccc" fill="none" />
                <rect x="4" y="4" width="8" height="8" fill={T} />
              </svg>
            </div>
            <div className="flex w-[28px] justify-center">
              <svg width="12" height="16" viewBox="0 0 12 16">
                <path d="M3 7V4a3 3 0 0 1 6 0v3" stroke={L} strokeWidth="1.6" fill="none" />
                <path d="M1 7h10v8H1z" fill={L} />
              </svg>
            </div>
            <div className="flex w-[26px] justify-center">
              <svg width="16" height="16" viewBox="0 0 16 16">
                <rect x="1" y="1" width="14" height="14" fill="none" stroke={L} />
                <circle cx="8" cy="8" r="4" fill="#444" stroke={L} strokeWidth="2" />
                <path d="M8 1v3M8 12v3M1 8h3M12 8h3" stroke={L} strokeWidth="2" />
              </svg>
            </div>
            <Coords label="X:" value="6,891" cls="ml-[2px]" />
            <Coords label="Y:" value="73,247" cls="ml-[14px]" />
            <Coords label="Z:" value="0,0" cls="ml-[14px]" />
            <span className="ml-[13px] pt-[1px] text-[11.5px] text-[#e4e4e4]">Grid = 10,0</span>
          </div>
          <div className="flex h-[22px] items-center pl-[310px]">
            <div className="h-[18px] w-[1px] bg-black" />
            <div className="flex h-[20px] w-[21px] items-center justify-center rounded-[3px] bg-[#5b86c2]">
              <svg width="16" height="16" viewBox="0 0 16 16">
                <path d="M8 1l6 3v8l-6 3-6-3V4zM2 4l6 3 6-3M8 7v8" stroke="#ddd" fill="none" />
              </svg>
            </div>
            <span className="ml-[5px] pt-[2px] text-[11px] text-[#d8d8d8]">Add Time Tag</span>
          </div>
        </div>
        <div className="flex w-[129px] flex-col">
          <div className="flex h-[28px] items-center">
            <svg width="18" height="14" viewBox="0 0 18 14"><path d="M2 2v10M3 7l6-5v10zM10 7l6-5v10z" stroke={L} fill={L} strokeWidth="1" /></svg>
            <div className="ml-[4px] h-[16px] w-[1px] bg-black" />
            <svg width="20" height="14" viewBox="0 0 20 14" className="ml-[1px]"><path d="M2 7l7-5v10zM11 2h2v10h-2zM15 2h2v10h-2z" fill={L} /></svg>
            <svg width="22" height="20" viewBox="0 0 22 20" className="ml-[2px]"><path d="M4 3l13 7.5L4 18z" fill={L} /><path d="M22 20h-3l3-3z" fill="#ddd" /></svg>
            <svg width="20" height="14" viewBox="0 0 20 14"><path d="M3 2h2v10H3zM7 2h2v10H7zM11 2l7 5-7 5z" fill={L} /></svg>
            <div className="ml-[4px] h-[16px] w-[1px] bg-black" />
            <svg width="20" height="14" viewBox="0 0 20 14" className="ml-[3px]"><path d="M2 2l6 5-6 5zM9 2l6 5-6 5zM16 2h2v10h-2z" fill={L} /></svg>
          </div>
          <div className="flex h-[22px] items-center">
            <svg width="18" height="12" viewBox="0 0 18 12"><path d="M2 6l5-5v10zM10 1l5 5-5 5z" fill={L} /></svg>
            <div className="ml-[4px] h-[16px] w-[1px] bg-black" />
            <div className="ml-[1px] flex h-[16px] w-[68px] items-center justify-between bg-[#5c5c5c] pl-[3px] pr-[4px] pt-[1px] text-[11.5px] text-[#cfcfcf]">
              <span>0</span>
              <span className="flex flex-col gap-[1px]">
                <span className="block h-0 w-0 border-x-[3px] border-b-[3px] border-x-transparent border-b-[#ccc]" />
                <span className="block h-0 w-0 border-x-[3px] border-t-[3px] border-x-transparent border-t-[#ccc]" />
              </span>
            </div>
            <div className="ml-[2px] h-[16px] w-[1px] bg-black" />
            <svg width="18" height="18" viewBox="0 0 18 18" className="ml-[4px]">
              <circle cx="7" cy="7" r="5" fill={L} />
              <path d="M7 4v3h3" stroke="#333" fill="none" />
              <circle cx="13" cy="13" r="3" fill="none" stroke={O} strokeWidth="2" />
            </svg>
          </div>
        </div>
        <div className="mt-[3px] flex h-[42px] w-[42px] items-center justify-center rounded-[3px] bg-[#5e5e5e]">
          <svg width="34" height="34" viewBox="0 0 34 34">
            <path d="M12 2h9v9h9v9h-9v9h-9v-9H3v-9h9z" fill={L} />
            <circle cx="26" cy="19" r="3" fill="none" stroke={T} strokeWidth="2" />
            <path d="M24 21l-9 9M18 27l2 2M15 30l2 2" stroke={T} strokeWidth="2" />
          </svg>
        </div>
        <div className="ml-[5px] mt-[3px] flex w-[46px] flex-col gap-[2px]">
          <div className="flex h-[20px] items-center justify-center whitespace-nowrap rounded-[2px] bg-[#5e5e5e] pt-[1px] text-[11.5px] text-[#dcdcdc]">Auto Key</div>
          <div className="flex h-[20px] items-center justify-center whitespace-nowrap rounded-[2px] bg-[#5e5e5e] pt-[1px] text-[11.5px] text-[#dcdcdc]">Set Key</div>
        </div>
        <div className="ml-[5px] mt-[3px] flex w-[114px] flex-col">
          <div className="flex h-[19px] items-center justify-between bg-[#5c5c5c] pl-[5px] pr-[6px] text-[11.5px] text-[#d0d0d0]">
            <span>Selected</span>
            <Caret />
          </div>
          <div className="mt-[4px] flex">
            <svg width="22" height="20" viewBox="0 0 22 20">
              <circle cx="5" cy="9" r="2" fill="none" stroke={T} /><circle cx="17" cy="9" r="2" fill="none" stroke={T} />
              <rect x="9" y="3" width="4" height="4" fill="none" stroke={L} />
              <path d="M5 18c0-6 1-9 4-12M17 18c0-6-1-9-4-12" stroke={T} strokeWidth="1.5" fill="none" />
              <path d="M22 20h-3l3-3z" fill="#ddd" />
            </svg>
            <div className="ml-[4px] flex h-[20px] w-[88px] items-center justify-center rounded-[2px] bg-[#5e5e5e] pt-[1px] text-[11.5px] text-[#dcdcdc]">Key Filters...</div>
          </div>
        </div>
        <div className="ml-[8px] mt-[2px] grid h-[44px] w-[96px] grid-cols-4">
          <Nav><circle cx="13" cy="9" r="5" fill="none" stroke={L} strokeWidth="1.8" /><path d="M9 13l-5 6" stroke={L} strokeWidth="2.4" /></Nav>
          <Nav><circle cx="11" cy="11" r="4" fill="none" stroke={L} strokeWidth="1.6" /><path d="M8 14l-4 5" stroke={L} strokeWidth="2.2" /><path d="M13 2h3v3h-3zM18 2h3v3h-3zM18 7h3v3h-3z" fill={T} /></Nav>
          <Nav><path d="M2 6V3h4M18 3h4v3M22 17v3h-4M6 20H2v-3" stroke={L} fill="none" /><path d="M12 5l6 3v6l-6 3-6-3V8z" fill={T} /></Nav>
          <Nav><path d="M16 2l5 3v6l-5 3-5-3V5z" fill={T} /><path d="M3 12l3-3 3 3-3 3zM9 16l3-3 3 3-3 3z" fill={L} /><path d="M24 23h-4l4-4z" fill="#ddd" /></Nav>
          <Nav><path d="M5 4l13 7.5L5 19l4-7.5z" fill="none" stroke={L} strokeWidth="1.8" /><path d="M24 23h-4l4-4z" fill="#ddd" /></Nav>
          <div className="flex h-[22px] w-[24px] items-center justify-center rounded-[2px] bg-[#5b86c2]">
            <svg width="22" height="22" viewBox="0 0 22 22"><path d="M7 11V6a1 1 0 0 1 2 0v4V4a1 1 0 0 1 2 0v6V4a1 1 0 0 1 2 0v6V6a1 1 0 0 1 2 0v9c0 3-2 5-5 5-2 0-3-1-4-3l-3-4c-.5-1 1-2 2-1z" fill="#e4e4e4" stroke="#333" strokeWidth="0.6" /></svg>
          </div>
          <Nav><circle cx="11" cy="12" r="7" fill={L} /><path d="M4 12h14" stroke={T} strokeWidth="2.2" /><path d="M3 15c8-1 14-5 17-10" stroke="#333" strokeWidth="1" fill="none" /><path d="M24 23h-4l4-4z" fill="#ddd" /></Nav>
          <Nav><rect x="4" y="3" width="16" height="16" fill={L} /><rect x="4" y="12" width="7" height="7" fill="#444" /><path d="M9 14l7-7M12 6h5v5" stroke="#333" strokeWidth="1.6" fill="none" /></Nav>
        </div>
      </div>
    </div>
  );
}
function Nav({ children }: { children?: React.ReactNode }) {
  return (
    <div className="flex h-[22px] w-[24px] items-center justify-center">
      <svg width="24" height="23" viewBox="0 0 24 23">{children}</svg>
    </div>
  );
}

function Cell({ cls = 'w-[40px]', on, children }: { cls?: string; on?: boolean; children?: React.ReactNode }) {
  return (
    <div className="flex w-[49px] shrink-0 justify-center">
      <div className={`flex h-[40px] items-center justify-center border-b-2 ${cls} ${on ? 'border-[#a5eac8]' : 'border-transparent'}`}>{children}</div>
    </div>
  );
}

function Taskbar() {
  return (
    <div className="flex h-[40px] bg-black text-white">
      <div className="flex h-[40px] w-[48px] items-center justify-center">
        <svg width="16" height="16" viewBox="0 0 16 16"><path d="M0 2.3l6.5-1v6.2H0zM7.3 1.2L16 0v7.5H7.3zM0 8.3h6.5v6.3l-6.5-1zM7.3 8.3H16V16l-8.7-1.2z" fill="#fff" /></svg>
      </div>
      <div className="flex h-[40px] w-[48px] items-center justify-center">
        <svg width="18" height="18" viewBox="0 0 18 18"><circle cx="11" cy="7" r="5.5" fill="none" stroke="#fff" strokeWidth="1.3" /><path d="M7 11l-6 6" stroke="#fff" strokeWidth="1.4" /></svg>
      </div>
      <div className="flex h-[40px] w-[48px] items-center justify-center">
        <svg width="20" height="14" viewBox="0 0 20 14"><rect x="4.5" y="0.5" width="11" height="13" fill="none" stroke="#fff" /><path d="M2 2H.5v10H2M18 2h1.5v10H18" stroke="#fff" fill="none" /></svg>
      </div>
      <div className="w-[1px]" />
      <Cell on>
        <svg width="22" height="20" viewBox="0 0 22 20"><path d="M0 1h9l2 2h11v17H0z" fill="#f5d67a" /><path d="M0 5h22v15H0z" fill="#fbe49a" /><path d="M6 20v-5h3v-2h4v2h3v5z" fill="#2fa4dc" /><rect x="9" y="17" width="4" height="3" fill="#f5d67a" /></svg>
      </Cell>
      <Cell>
        <svg width="24" height="24" viewBox="0 0 24 24"><path d="M8 6a4 4 0 0 1 8 0" stroke="#fff" fill="none" strokeWidth="1.3" /><rect x="1" y="6" width="22" height="17" rx="1" fill="#fff" /><rect x="6" y="8" width="5.5" height="5.5" fill="#e5492b" /><rect x="12.5" y="8" width="5.5" height="5.5" fill="#7fba00" /><rect x="6" y="14.5" width="5.5" height="5.5" fill="#00a4ef" /><rect x="12.5" y="14.5" width="5.5" height="5.5" fill="#ffb900" /></svg>
      </Cell>
      <Cell>
        <svg width="24" height="24" viewBox="0 0 24 24"><circle cx="12" cy="12" r="11.5" fill="#1ed760" /><path d="M5.5 9c4-1.2 9-1 13 1M6.5 12.5c3.5-1 7.5-.8 11 1M7.5 16c3-.8 6-.6 9 .9" stroke="#111" strokeWidth="1.9" fill="none" /></svg>
      </Cell>
      <Cell>
        <svg width="24" height="24" viewBox="0 0 24 24">
          <circle cx="12" cy="12" r="11.5" fill="#e0483b" />
          <path d="M12 12L22.2 6.5A11.5 11.5 0 1 1 1.7 17z" fill="#2aa24b" />
          <path d="M12 23.5A11.5 11.5 0 0 0 22.2 6.5H12z" fill="#fbc30a" />
          <circle cx="12" cy="12" r="5.6" fill="#fff" />
          <circle cx="12" cy="12" r="4.4" fill="#4a8af4" />
        </svg>
      </Cell>
      <Cell>
        <div className="flex h-[24px] w-[24px] items-center justify-center bg-[#f0d8d6] font-['Liberation_Sans',sans-serif] text-[22px] font-bold leading-none text-[#c4262e]">A</div>
      </Cell>
      <Cell>
        <div className="flex h-[24px] w-[24px] items-start justify-center rounded-[3px] bg-[#2f78b8] pl-[1px] font-['Liberation_Serif',serif] text-[13px] leading-[15px] text-[#d9e66a]">H<span className="text-[12px] leading-[30px]">9</span></div>
      </Cell>
      <Cell on>
        <div className="flex h-[22px] w-[22px] items-center justify-center border-2 border-[#cc1a10] bg-[#2a1210]">
          <svg width="14" height="14" viewBox="0 0 14 14"><path d="M1 13c3-2 5-6 5-10 0-3 1-2 1 0 0 4 3 6 6 6-4 0-8 1-12 4z" fill="none" stroke="#eee" /></svg>
        </div>
      </Cell>
      <Cell>
        <div className="flex h-[24px] w-[24px] items-center justify-center rounded-full border border-[#999] bg-[#3c4048] font-['Liberation_Sans',sans-serif] text-[15px] font-bold italic text-[#ddd]">7</div>
      </Cell>
      <Cell cls="w-[48px] bg-[#333333]" on>
        <Logo />
      </Cell>
      <div className="ml-auto flex items-center">
        <svg width="14" height="8" viewBox="0 0 14 8"><path d="M1 7l6-6 6 6" stroke="#ddd" fill="none" strokeWidth="1.2" /></svg>
        <svg width="16" height="14" viewBox="0 0 16 14" className="ml-[12px]"><path d="M1 12a11 11 0 0 1 11-11M4 12a8 8 0 0 1 8-8M7 12a5 5 0 0 1 5-5" stroke="#ccc" fill="none" strokeWidth="1.1" /><circle cx="12" cy="12" r="1.3" fill="#eee" /></svg>
        <svg width="16" height="12" viewBox="0 0 16 12" className="ml-[7px]"><path d="M1 3h2v2h1v2H3v2H1z" fill="#eee" /><rect x="5" y="2" width="10" height="8" fill="none" stroke="#eee" /><rect x="6" y="3" width="6" height="6" fill="#eee" /></svg>
        <svg width="16" height="14" viewBox="0 0 16 14" className="ml-[9px]"><path d="M1 5h3l4-3v10l-4-3H1z" fill="none" stroke="#ddd" /><path d="M10 5a3 3 0 0 1 0 4M12 3a6 6 0 0 1 0 8" stroke="#ddd" fill="none" /></svg>
        <div className="ml-[6px] flex w-[58px] flex-col items-center whitespace-nowrap text-[11.75px] leading-[19px] text-[#e8e8e8]">
          <span>09:48</span>
          <span>06/12/2017</span>
        </div>
        <div className="relative ml-[21px] mr-[13px] h-[24px] w-[24px]">
          <svg width="18" height="16" viewBox="0 0 18 16" className="ml-[1px] mt-[2px]"><path d="M0 0h17v12H8l-3 3v-3H0z" fill="#fff" /><path d="M3 3h11M3 6h11M3 9h8" stroke="#111" /></svg>
          <div className="absolute bottom-0 right-0 flex h-[15px] w-[15px] items-center justify-center rounded-full border border-[#888] bg-[#333] text-[10px] font-bold text-white">1</div>
        </div>
      </div>
    </div>
  );
}

function Logo({ small }: { small?: boolean }) {
  return (
    <div className={`flex items-center justify-center bg-gradient-to-br from-[#dff2ef] to-[#9bd7d5] font-['Liberation_Sans',sans-serif] font-bold text-[#1b8f93] ${small ? 'h-[16px] w-[14px] text-[13px]' : 'h-[24px] w-[24px] text-[22px]'}`}>3</div>
  );
}

export default function App() {
  return (
    <div className="flex h-[768px] w-[1366px] flex-col overflow-hidden bg-[#444444] font-['Roboto',sans-serif]">
      <div className="flex h-[23px] items-center bg-white">
        <div className="ml-[3px]"><Logo small /></div>
        <span className="ml-[6px] mt-[2px] whitespace-nowrap text-[11.75px] text-black">mobile ikea.max - Autodesk 3ds Max 2018 - Student Version</span>
        <div className="ml-auto mr-[2px] flex items-center">
          <svg width="46" height="23" viewBox="0 0 46 23"><path d="M18 11h11" stroke="#111" /></svg>
          <svg width="46" height="23" viewBox="0 0 46 23"><path d="M19 8h8v8h-8zM21 8V6h8v8h-2" stroke="#111" fill="none" /></svg>
          <svg width="46" height="23" viewBox="0 0 46 23"><path d="M18 6l10 10M28 6L18 16" stroke="#111" /></svg>
        </div>
      </div>
      <Menu />
      <Toolbar />
      <div className="flex h-[571px]">
        <LeftPanel />
        <div className="relative h-[571px] w-[915px] overflow-hidden border-2 border-[#6b5a2a] bg-gradient-to-b from-[#171717] to-[#4a4a4a]">
          <Scene />
          <div className="absolute left-[3px] top-[5px] whitespace-nowrap text-[11.5px] tracking-[0.05px] text-[#d0d0d0]">[+] [Perspective ] [Standard ] [Facets + Edged Faces ]</div>
        </div>
        <RightPanel />
      </div>
      <Bottom />
      <Taskbar />
    </div>
  );
}
